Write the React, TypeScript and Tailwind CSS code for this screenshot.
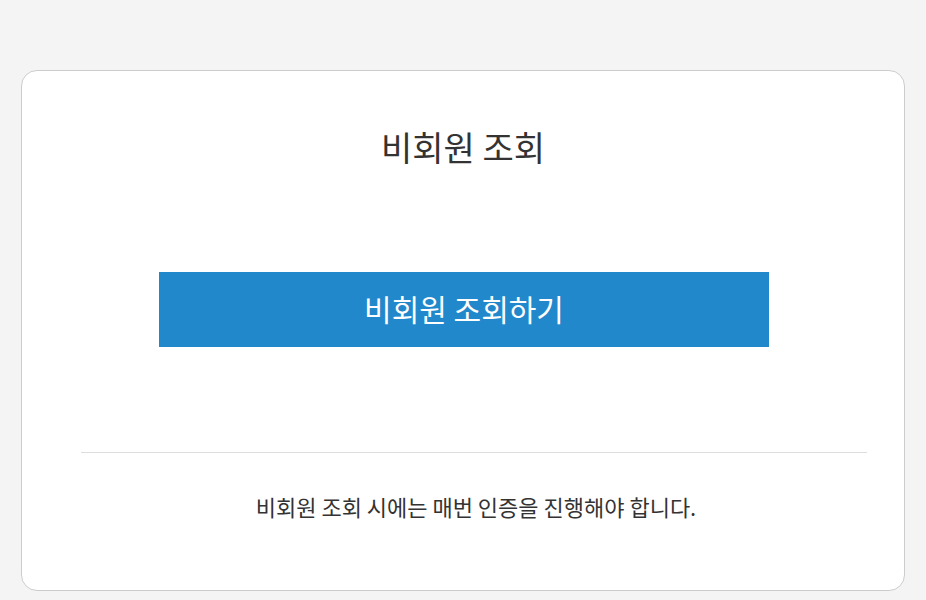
import React from 'react';

export default function App() {
  return (
    <div
      className="min-h-[600px] bg-[#f4f4f4] pt-[70px] px-[21px] pb-[9px]"
      style={{ fontFamily: '"Noto Sans CJK KR", "Noto Sans", sans-serif' }}
    >
      <div className="h-[521px] rounded-2xl border border-[#cccccc] bg-white">
        {/* Title */}
        <h1 className="pt-[56px] text-center text-[34px] leading-[40px] font-normal text-[#333333]">
          비회원 조회
        </h1>

        {/* Lookup button */}
        <div className="mt-[105px] pl-[137px]">
          <button className="h-[75px] w-[610px] bg-[#2288cc] pb-[2px] text-[30px] font-normal text-white">
            비회원 조회하기
          </button>
        </div>

        {/* Notice */}
        <div className="ml-[59px] mr-[37px] mt-[105px]">
          <div className="h-px bg-[#dddddd]" />
          <p className="mt-[38px] pl-[4px] text-center text-[22px] leading-[30px] text-[#333333]">
            비회원 조회 시에는 매번 인증을 진행해야 합니다.
          </p>
        </div>
      </div>
    </div>
  );
}
